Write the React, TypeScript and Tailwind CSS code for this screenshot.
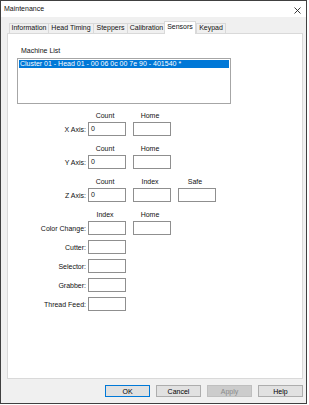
import React from 'react';

const TABS = [
  { name: 'Information', w: 'w-[39px]' },
  { name: 'Head Timing', w: 'w-[45px]' },
  { name: 'Steppers', w: 'w-[34px]' },
  { name: 'Calibration', w: 'w-[38px]' },
  { name: 'Sensors', w: 'w-[32px]', active: true },
  { name: 'Keypad', w: 'w-[30px]' },
];

function Box({ value }: { value?: string }) {
  return (
    <div className="w-[38px] h-[14px] border border-[#8f8f8f] bg-white pl-[2px] leading-[12px]">
      {value}
    </div>
  );
}

function Header({ cols }: { cols: string[] }) {
  return (
    <div className="flex h-[9px] leading-[9px]">
      <div className="w-[80px]" />
      <div className="flex gap-[7px]">
        {cols.map((c) => (
          <div key={c} className="w-[38px] text-center pr-[4px]">
            {c}
          </div>
        ))}
      </div>
    </div>
  );
}

function Row({ label, boxes }: { label: string; boxes: (string | undefined)[] }) {
  return (
    <div className="flex items-center">
      <div className="w-[78px] text-right leading-[9px]">{label}</div>
      <div className="ml-[2px] flex gap-[7px]">
        {boxes.map((b, i) => (
          <Box key={i} value={b} />
        ))}
      </div>
    </div>
  );
}

function Btn({ label, primary, disabled }: { label: string; primary?: boolean; disabled?: boolean }) {
  let cls = 'bg-[#e1e1e1] border-[#adadad] text-black';
  if (primary) cls = 'bg-[#e1e1e1] border-[#0078d7] text-black';
  if (disabled) cls = 'bg-[#cccccc] border-[#bfbfbf] text-[#8a8a8a]';
  return (
    <div className={`w-[45px] h-[12px] border flex items-center justify-center leading-none ${cls}`}>
      {label}
    </div>
  );
}

export default function App() {
  return (
    <div className="w-[309px] h-[405px] bg-white">
      <div className="w-[307px] h-[404px] border border-[#404040] bg-[#f0f0f0] flex flex-col font-['Liberation_Sans',sans-serif] text-[7px] text-[#111]">
        {/* title bar */}
        <div className="h-[16px] bg-white flex items-center justify-between pl-[3px] pr-[5px]">
          <span className="text-[7px]">Maintenance</span>
          <svg width="7" height="7" viewBox="0 0 7 7" className="mt-[2px]">
            <path d="M0.5 0.5L6.5 6.5M6.5 0.5L0.5 6.5" stroke="#222" strokeWidth="0.9" />
          </svg>
        </div>

        {/* tabs */}
        <div className="mt-[4px] h-[12px] pl-[8px] flex items-end">
          {TABS.map((t, i) =>
            t.active ? (
              <div
                key={t.name}
                className={`${t.w} h-[13px] -mb-px relative z-10 bg-white border border-b-0 border-[#d9d9d9] flex items-center justify-center pb-[1px] -ml-px`}
              >
                {t.name}
              </div>
            ) : (
              <div
                key={t.name}
                className={`${t.w} h-[10px] bg-[#f0f0f0] border-t border-l border-[#d9d9d9] flex items-center justify-center ${i === TABS.length - 1 ? 'border-r' : ''}`}
              >
                {t.name}
              </div>
            )
          )}
        </div>

        {/* panel */}
        <div className="ml-[6px] w-[296px] h-[346px] bg-white border border-[#d9d9d9] flex flex-col">
          <div className="mt-[12px] ml-[13px] h-[9px] leading-[9px]">Machine List</div>
          <div className="mt-[3px] ml-[9px] w-[214px] h-[46px] border border-[#a6a6a6] p-[1px]">
            <div className="h-[8px] leading-[8px] bg-[#0078d7] text-white pl-[1px] whitespace-nowrap">
              Cluster 01 - Head 01 - 00 06 0c 00 7e 90 - 401540 *
            </div>
          </div>

          <div className="mt-[7px] flex flex-col">
            <Header cols={['Count', 'Home']} />
            <div className="mt-[2px]">
              <Row label="X Axis:" boxes={['0', undefined]} />
            </div>
            <div className="mt-[8px]">
              <Header cols={['Count', 'Home']} />
            </div>
            <div className="mt-[2px]">
              <Row label="Y Axis:" boxes={['0', undefined]} />
            </div>
            <div className="mt-[8px]">
              <Header cols={['Count', 'Index', 'Safe']} />
            </div>
            <div className="mt-[2px]">
              <Row label="Z Axis:" boxes={['0', undefined, undefined]} />
            </div>
            <div className="mt-[8px]">
              <Header cols={['Index', 'Home']} />
            </div>
            <div className="mt-[2px] flex flex-col gap-[5px]">
              <Row label="Color Change:" boxes={[undefined, undefined]} />
              <Row label="Cutter:" boxes={[undefined]} />
              <Row label="Selector:" boxes={[undefined]} />
              <Row label="Grabber:" boxes={[undefined]} />
              <Row label="Thread Feed:" boxes={[undefined]} />
            </div>
          </div>
        </div>

        {/* buttons */}
        <div className="mt-[6px] flex justify-end gap-[6px] pr-[3px]">
          <Btn label="OK" primary />
          <Btn label="Cancel" />
          <Btn label="Apply" disabled />
          <Btn label="Help" />
        </div>
      </div>
    </div>
  );
}
